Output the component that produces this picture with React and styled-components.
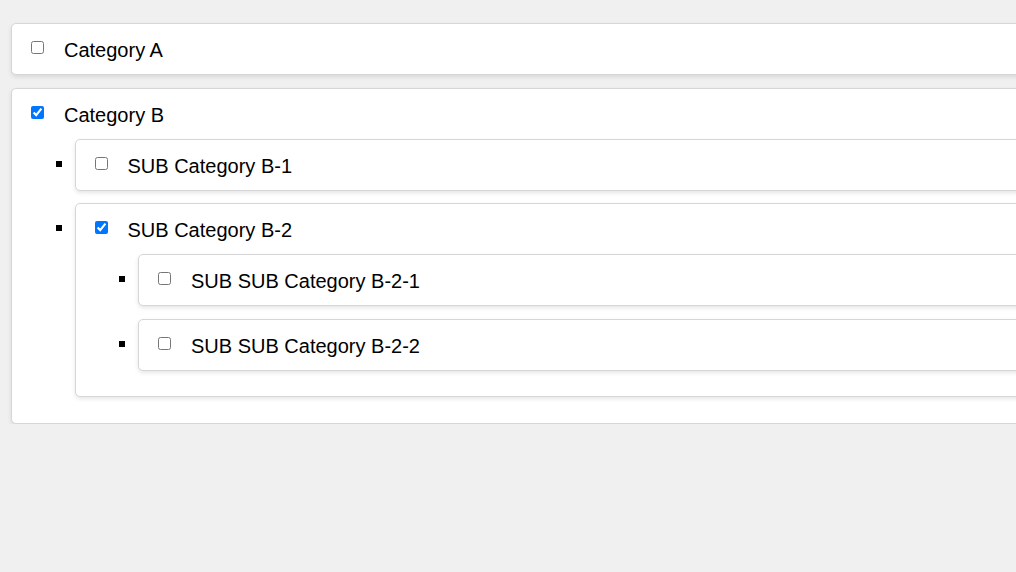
import React, { useState } from "react";
import styled, { createGlobalStyle } from "styled-components";

const Global = createGlobalStyle`
  html, body { margin: 0; padding: 0; background: #f0f0f0; overflow: hidden; }
  body { font-family: "Liberation Sans", Arial, sans-serif; color: #000; }
`;

const Page = styled.div`
  padding: 23px 0 0 11px;
  width: 1100px;
`;

const Card = styled.div`
  background: #fff;
  border: 1px solid #d6d6d6;
  border-radius: 5px;
  box-shadow: 0 2px 4px rgba(0, 0, 0, 0.1);
  padding: 12px 15px 13px;
  & + & { margin-top: 13px; }
`;

const Row = styled.label`
  display: flex;
  align-items: center;
  height: 25px;
  font-size: 20px;
`;

const Check = styled.input`
  width: 13px;
  height: 13px;
  margin: 0 20px 2px 4px;
  flex: none;
`;

const Text = styled.span`
  margin-top: 4px;
  white-space: nowrap;
`;

const List = styled.ul`
  list-style: square;
  margin: 12.5px 0 12.5px;
  padding-left: 47.5px;
  font-size: 20px;
`;

const Item = styled.li`
  & + & { margin-top: 12.75px; }
`;

const data = [
  { id: "a", label: "Category A", checked: false },
  {
    id: "b",
    label: "Category B",
    checked: true,
    children: [
      { id: "b1", label: "SUB Category B-1", checked: false },
      {
        id: "b2",
        label: "SUB Category B-2",
        checked: true,
        children: [
          { id: "b21", label: "SUB SUB Category B-2-1", checked: false },
          { id: "b22", label: "SUB SUB Category B-2-2", checked: false },
        ],
      },
    ],
  },
];

function Node({ node, state, toggle }) {
  return (
    <Card>
      <Row>
        <Check
          type="checkbox"
          checked={!!state[node.id]}
          onChange={() => toggle(node.id)}
        />
        <Text>{node.label}</Text>
      </Row>
      {node.children && (
        <List>
          {node.children.map((c) => (
            <Item key={c.id}>
              <Node node={c} state={state} toggle={toggle} />
            </Item>
          ))}
        </List>
      )}
    </Card>
  );
}

export default function App() {
  const init = {};
  const walk = (ns) =>
    ns.forEach((n) => {
      init[n.id] = n.checked;
      if (n.children) walk(n.children);
    });
  walk(data);
  const [state, setState] = useState(init);
  const toggle = (id) => setState((s) => ({ ...s, [id]: !s[id] }));
  return (
    <>
      <Global />
      <Page>
        {data.map((n) => (
          <Node key={n.id} node={n} state={state} toggle={toggle} />
        ))}
      </Page>
    </>
  );
}
